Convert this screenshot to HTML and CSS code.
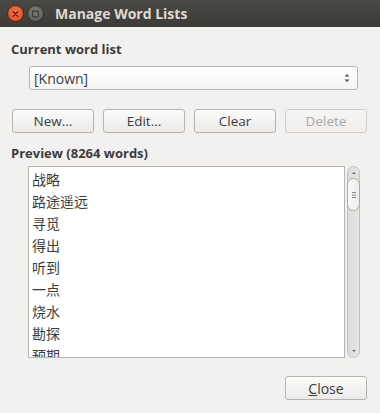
FILE: index.html
```html
<!DOCTYPE html>
<html>
<head>
<meta charset="utf-8">
<link rel="stylesheet" href="styles.css">
</head>
<body>
<div class="window">
  <div class="titlebar">
    <span class="tb-btn tb-close"><svg width="16" height="16" viewBox="0 0 16 16"><path d="M5.5 5.5 L10.5 10.5 M10.5 5.5 L5.5 10.5" stroke="#3a1a10" stroke-width="1.4" stroke-linecap="round"/></svg></span>
    <span class="tb-btn tb-min"><svg width="16" height="16" viewBox="0 0 16 16"><rect x="5" y="5" width="6" height="6" rx="0.5" fill="none" stroke="#3c3b37" stroke-width="1.3"/></svg></span>
    <span class="title">Manage Word Lists</span>
  </div>
  <div class="content">
    <div class="label first">Current word list</div>
    <div class="combo">
      <span>[Known]</span>
      <svg class="combo-arrows" width="8" height="12" viewBox="0 0 8 12"><path d="M1.5 4.5 L4 2 L6.5 4.5 Z M1.5 7.5 L4 10 L6.5 7.5 Z" fill="#555"/></svg>
    </div>
    <div class="buttons">
      <div class="btn">New...</div>
      <div class="btn">Edit...</div>
      <div class="btn">Clear</div>
      <div class="btn disabled">Delete</div>
    </div>
    <div class="label">Preview (8264 words)</div>
    <div class="listrow">
      <div class="list">
        <div class="item">战略</div>
        <div class="item">路途遥远</div>
        <div class="item">寻觅</div>
        <div class="item">得出</div>
        <div class="item">听到</div>
        <div class="item">一点</div>
        <div class="item">烧水</div>
        <div class="item">勘探</div>
        <div class="item">预期</div>
      </div>
      <div class="scrollbar">
        <svg class="sb-up" width="8" height="6" viewBox="0 0 8 6"><path d="M2 4 L4 2 L6 4 Z" fill="#666"/></svg>
        <div class="thumb"><svg width="6" height="8" viewBox="0 0 6 8"><path d="M1 1.5 H5 M1 4 H5 M1 6.5 H5" stroke="#888" stroke-width="1"/></svg></div>
        <svg class="sb-down" width="8" height="6" viewBox="0 0 8 6"><path d="M2 2 L4 4 L6 2 Z" fill="#666"/></svg>
      </div>
    </div>
    <div class="footer">
      <div class="btn"><span class="ul">C</span>lose</div>
    </div>
  </div>
</div>
</body>
</html>
```
FILE: styles.css
```css
html, body {
  margin: 0;
  padding: 0;
}
body {
  width: 380px;
  height: 413px;
  overflow: hidden;
  background: #f2f1f0;
  font-family: "Open Sans", "Noto Sans CJK SC", sans-serif;
  font-size: 13px;
  color: #3c3c3c;
}
.titlebar {
  height: 27px;
  background: linear-gradient(#4a4944, #3c3b37);
  display: flex;
  align-items: center;
  padding-left: 7px;
  box-sizing: border-box;
}
.tb-btn {
  width: 17px;
  height: 17px;
  border-radius: 50%;
  display: flex;
  align-items: center;
  justify-content: center;
  box-sizing: border-box;
}
.tb-close {
  background: radial-gradient(circle at 50% 40%, #f5754f, #e0461c);
  border: 1px solid #2f2e2a;
}
.tb-min {
  margin-left: 3px;
  background: radial-gradient(circle at 50% 40%, #7d7c77, #5c5b56);
  border: 1px solid #2f2e2a;
}
.title {
  margin-left: 11px;
  color: #dfdbd2;
  font-weight: bold;
  font-size: 14px;
  font-family: "Open Sans", sans-serif;
}
.content {
  display: flex;
  flex-direction: column;
}
.label {
  font-weight: bold;
  color: #3c3c3c;
  margin-left: 11px;
  height: 18px;
  line-height: 18px;
}
.label.first {
  margin-top: 13px;
}
.combo {
  margin: 8px 22px 0 29px;
  height: 24px;
  box-sizing: border-box;
  border: 1px solid #b8b5b0;
  border-radius: 3px;
  background: linear-gradient(#ffffff, #f4f4f3);
  display: flex;
  align-items: center;
  justify-content: space-between;
  padding: 0 6px 0 4px;
  color: #3c3c3c;
  font-size: 14px;
}
.buttons {
  display: flex;
  gap: 9px;
  margin: 19px 13px 0 12px;
}
.btn {
  width: 82px;
  height: 24px;
  box-sizing: border-box;
  border: 1px solid #b6b3ae;
  border-radius: 3px;
  background: linear-gradient(#fbfbfa, #ecebe9);
  display: flex;
  align-items: center;
  justify-content: center;
  color: #3c3c3c;
  font-size: 13.5px;
}
.btn.disabled {
  color: #a8a7a4;
  border-color: #d0cdc9;
  background: linear-gradient(#f6f5f4, #efeeed);
}
.buttons + .label {
  margin-top: 11px;
}
.listrow {
  display: flex;
  margin: 4px 0 0 28px;
  height: 192px;
}
.list {
  width: 317px;
  height: 192px;
  box-sizing: border-box;
  border: 1px solid #b8b5b0;
  background: #fff;
  overflow: hidden;
  padding: 1px 0 0 3px;
  font-family: "Noto Sans CJK SC", sans-serif;
  font-size: 14px;
  color: #3c3c3c;
}
.item {
  height: 22px;
  line-height: 22px;
}
.scrollbar {
  margin-left: 2px;
  width: 13px;
  height: 192px;
  box-sizing: border-box;
  border: 1px solid #c2bfbb;
  border-radius: 7px;
  background: linear-gradient(90deg, #dddcda, #e6e5e3);
  display: flex;
  flex-direction: column;
  align-items: center;
}
.sb-up {
  margin-top: 3px;
}
.thumb {
  margin-top: 2px;
  width: 13px;
  height: 33px;
  box-sizing: border-box;
  border: 1px solid #aeaba6;
  border-radius: 7px;
  background: linear-gradient(90deg, #fafafa, #ececea);
  display: flex;
  align-items: center;
  justify-content: center;
}
.sb-down {
  margin-top: auto;
  margin-bottom: 3px;
}
.footer {
  display: flex;
  justify-content: flex-end;
  margin: 18px 13px 0 0;
}
.footer .btn {
  font-size: 14px;
}
.ul {
  text-decoration: underline;
}
```
